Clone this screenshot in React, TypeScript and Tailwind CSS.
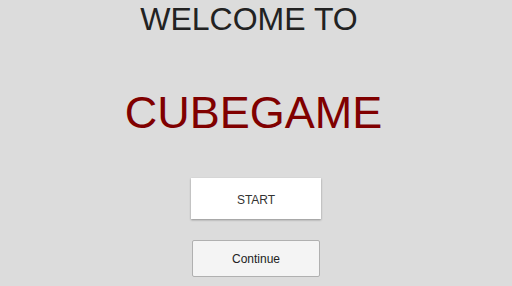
export default function App() {
  return (
    <div className="w-[512px] h-[286px] bg-[#dcdcdc] overflow-hidden flex flex-col items-center" style={{ fontFamily: '"Liberation Sans", Arial, sans-serif' }}>
      <div className="mt-[3px] text-[32px] leading-none text-[#222222] mr-[14px]">WELCOME TO</div>
      <div className="mt-[55px] text-[45px] leading-none text-[#800000] mr-[5px]">CUBEGAME</div>
      <button className="mt-[43px] w-[130px] h-[41px] pt-[2px] bg-white text-[12px] text-[#333333] shadow-[0_1px_2px_rgba(0,0,0,0.35)]">START</button>
      <button className="mt-[21px] w-[128px] h-[37px] pt-[1px] bg-[#f4f4f4] border border-[#b0b0b0] rounded-[2px] text-[12px] text-[#222222]">Continue</button>
    </div>
  );
}
